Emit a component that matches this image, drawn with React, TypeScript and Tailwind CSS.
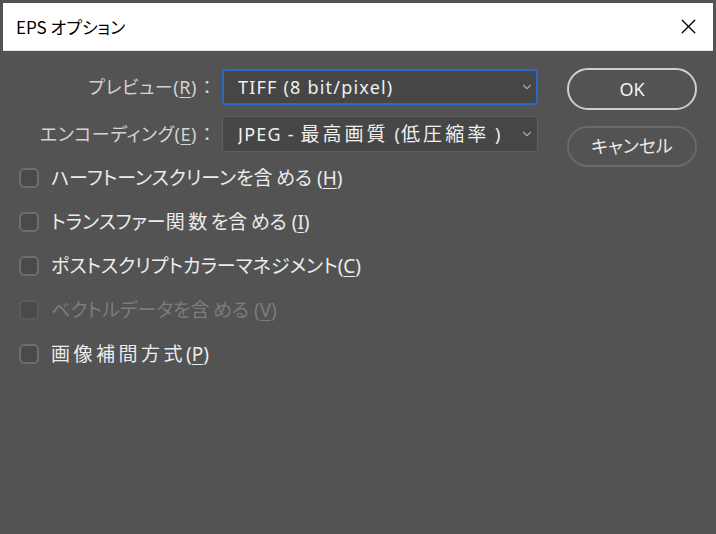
import { ChevronDown, X } from "lucide-react";

const jp = "font-['Noto_Sans','Noto_Sans_CJK_JP',sans-serif] [font-feature-settings:'palt']";

const isKanji = (c: string) => /[\u3400-\u9fff]/.test(c);

// kanji in the original font run wider than the kana, so space them a little
function Jp({ text, kc }: { text: string; kc: string }) {
  return (
    <>
      {[...text].map((c, i) =>
        isKanji(c) ? (
          <span key={i} className={kc}>
            {c}
          </span>
        ) : (
          c
        )
      )}
    </>
  );
}

function Key({ k }: { k: string }) {
  return (
    <span>
      (<span className="underline underline-offset-[3px]">{k}</span>)
    </span>
  );
}

function Select({ children, focused }: { children: React.ReactNode; focused?: boolean }) {
  return (
    <div
      className={`flex h-[36px] w-[316px] items-center justify-between rounded-[4px] bg-[#464646] text-[18px] tracking-[1.2px] text-[#f0f0f0] ${
        focused ? "border-2 border-[#2a6ac4] pl-[14px] pr-[2px]" : "border border-[#606060] pl-[15px] pr-[3px]"
      }`}
    >
      <span className="overflow-hidden whitespace-nowrap">{children}</span>
      <ChevronDown className="h-[14px] w-[14px] shrink-0 text-[#a8a8a8]" strokeWidth={2} />
    </div>
  );
}

function Check({ label, k, disabled }: { label: string; k: string; disabled?: boolean }) {
  return (
    <div className="flex h-[44px] items-center">
      <span
        className={`h-[20px] w-[20px] rounded-[5px] border-2 bg-[#4a4a4a] ${
          disabled ? "border-[#5a5a5a]" : "border-[#6e6e6e]"
        }`}
      />
      <span
        className={`ml-[12px] whitespace-nowrap text-[19px] ${disabled ? "text-[#7c7c7c]" : "text-[#ececec]"}`}
      >
        <Jp text={label} kc="tracking-[3.5px]" />
        <Key k={k} />
      </span>
    </div>
  );
}

export default function App() {
  return (
    <div className={`flex h-[534px] w-[716px] flex-col bg-[#535353] ${jp}`}>
      <div className="mx-[3px] mt-[3px] flex h-[48px] items-center justify-between border-b border-[#e4e4e4] bg-white pl-[13px] pr-[12px]">
        <span className="font-['Noto_Sans_CJK_JP',sans-serif] text-[17px] text-black">EPS オプション</span>
        <X className="h-[25px] w-[25px] text-black" strokeWidth={1.3} />
      </div>

      <div className="flex">
        <div className="flex flex-col pl-[19px] pt-[18px]">
          <div className="flex items-center">
            <span className="w-[193px] whitespace-nowrap text-right text-[18px] tracking-[0.6px] text-[#d4d4d4]">
              プレビュー<Key k="R" /> ：
            </span>
            <div className="ml-[10px]">
              <Select focused>TIFF (8 bit/pixel)</Select>
            </div>
          </div>
          <div className="mt-[11px] flex items-center">
            <span className="w-[193px] whitespace-nowrap text-right text-[18px] tracking-[0.6px] text-[#d4d4d4]">
              エンコーディング<Key k="E" /> ：
            </span>
            <div className="ml-[10px]">
              <Select>
                <Jp text="JPEG - 最高画質 (低圧縮率 )" kc="text-[19px] tracking-[3px]" />
              </Select>
            </div>
          </div>

          <div className="mt-[4px] flex flex-col">
            <Check label="ハーフトーンスクリーンを含める " k="H" />
            <Check label="トランスファー関数を含める " k="I" />
            <Check label="ポストスクリプトカラーマネジメント" k="C" />
            <Check label="ベクトルデータを含める " k="V" disabled />
            <Check label="画像補間方式" k="P" />
          </div>
        </div>

        <div className="ml-[29px] flex flex-col pt-[17px]">
          <button className="flex h-[42px] w-[130px] items-center justify-center rounded-full border-2 border-[#cfcfcf] text-[18px] text-[#f2f2f2]">
            OK
          </button>
          <button className="mt-[16px] flex h-[41px] w-[130px] items-center justify-center rounded-full border-2 border-[#6a6a6a] text-[18px] text-[#e8e8e8]">
            キャンセル
          </button>
        </div>
      </div>
    </div>
  );
}
